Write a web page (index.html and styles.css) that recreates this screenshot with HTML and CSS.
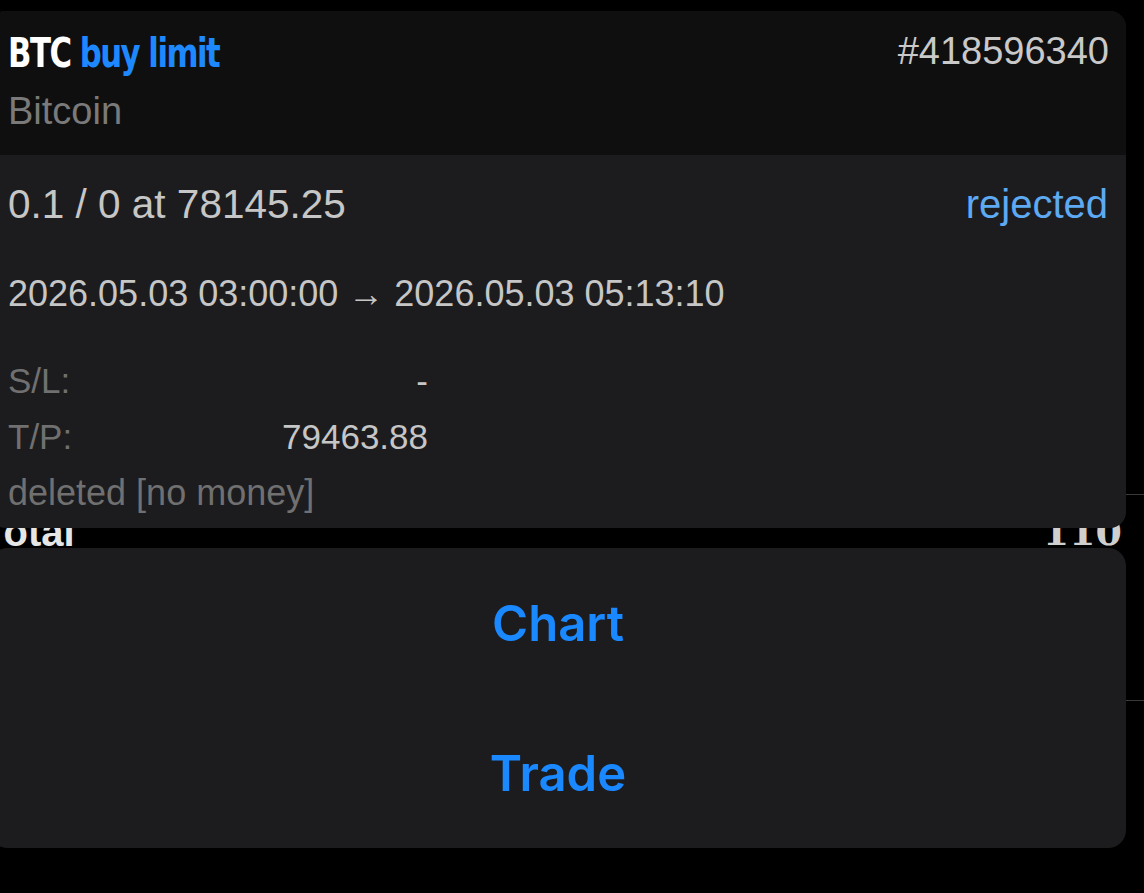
FILE: index.html
```html
<!DOCTYPE html>
<html>
	<head>
	<meta name="viewport" content="width=device-width, initial-scale=1.0"/>
	<link rel="stylesheet" href="styles.css">
	</head>
	<body>
		<div class="screen">
			<div class="list">
				<div class="list-row first"></div>
				<div class="list-row total">
					<span class="total-label">Total</span>
					<span class="total-value">110</span>
				</div>
			</div>

			<div class="sheet">
				<section class="order">
					<header class="order-head">
						<div class="head-line">
							<h1 class="title"><span class="sym">BTC</span> <span class="kind">buy limit</span></h1>
							<span class="ticket">#418596340</span>
						</div>
						<div class="desc">Bitcoin</div>
					</header>
					<div class="order-body">
						<div class="volume-line">
							<span class="volume">0.1 / 0 at 78145.25</span>
							<span class="state">rejected</span>
						</div>
						<div class="times">2026.05.03 03:00:00 &rarr; 2026.05.03 05:13:10</div>
						<div class="kv">
							<span class="k">S/L:</span><span class="v">-</span>
							<span class="k">T/P:</span><span class="v">79463.88</span>
						</div>
						<div class="comment">deleted [no money]</div>
					</div>
				</section>

				<section class="actions">
					<button class="action">Chart</button>
					<button class="action">Trade</button>
				</section>
			</div>
		</div>
	</body>
</html>
```

FILE: styles.css
```css
	html, body {
		margin: 0;
		padding: 0;
		background-color: #000000;
	}

	.screen {
		position: relative;
		width: 1144px;
		height: 893px;
		overflow: hidden;
		font-family: "Liberation Sans", Arial, sans-serif;
	}

	/* list underneath the sheet */
	.list {
		position: absolute;
		top: 0;
		left: 0;
		right: 0;
	}

	.list-row {
		border-bottom: 1px solid #3a3a3c;
		box-sizing: border-box;
	}

	.list-row.first {
		height: 495px;
	}

	.list-row.total {
		height: 206px;
		display: flex;
		justify-content: space-between;
		align-items: flex-start;
		padding: 14px 22px 0 0;
		font-weight: bold;
		font-size: 40px;
		line-height: 46px;
	}

	.total-label {
		color: #e6e6e6;
		margin-left: -18px;
	}

	.total-value {
		color: #cfcfcf;
		font-family: "DejaVu Serif", serif;
		font-size: 38px;
	}

	/* the overlay sheet */
	.sheet {
		position: absolute;
		top: 11px;
		left: -10px;
		width: 1136px;
		display: flex;
		flex-direction: column;
		gap: 20px;
	}

	.order {
		height: 517px;
		border-radius: 16px;
		overflow: hidden;
		background-color: #1c1c1e;
		display: flex;
		flex-direction: column;
	}

	.order-head {
		height: 144px;
		box-sizing: border-box;
		background-color: #0f0f0f;
		padding: 18px 17px 0 18px;
	}

	.head-line {
		display: flex;
		justify-content: space-between;
		align-items: flex-start;
	}

	.title {
		margin: 0;
		font-family: "DejaVu Sans", sans-serif;
		font-weight: bold;
		font-size: 41px;
		line-height: 48px;
		letter-spacing: -2px;
		white-space: nowrap;
		transform: scaleX(0.75);
		transform-origin: left center;
	}

	.sym {
		color: #ffffff;
	}

	.kind {
		color: #1e88ff;
	}

	.ticket {
		color: #c9c9c9;
		font-size: 38px;
		line-height: 44px;
	}

	.desc {
		margin-top: 12px;
		color: #7a7a7a;
		font-size: 38px;
		line-height: 44px;
	}

	.order-body {
		padding: 25px 18px 0 18px;
		color: #c6c6c6;
	}

	.volume-line {
		display: flex;
		justify-content: space-between;
		font-size: 40.5px;
		line-height: 48px;
	}

	.state {
		color: #5eaaf2;
		font-size: 40px;
	}

	.times {
		margin-top: 44px;
		font-size: 36px;
		line-height: 44px;
	}

	.kv {
		margin-top: 37px;
		display: grid;
		grid-template-columns: 150px 270px;
		font-size: 35px;
		line-height: 56px;
	}

	.k {
		color: #707070;
	}

	.v {
		text-align: right;
		color: #c6c6c6;
	}

	.comment {
		color: #707070;
		font-size: 36px;
		line-height: 56px;
	}

	.actions {
		height: 300px;
		border-radius: 18px;
		background-color: #1c1c1e;
		display: flex;
		flex-direction: column;
	}

	.action {
		flex: 1;
		border: none;
		background: transparent;
		padding: 0;
		color: #1a88ff;
		font-family: "Inter", "Liberation Sans", sans-serif;
		font-weight: 600;
		font-size: 49px;
	}
```
